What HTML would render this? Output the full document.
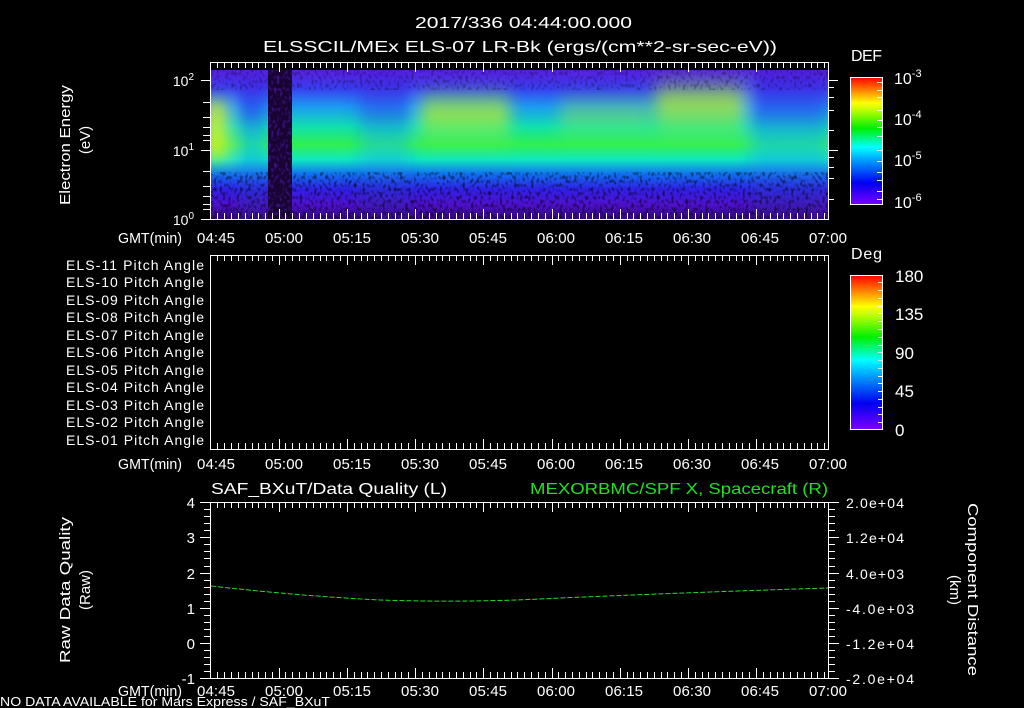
<!DOCTYPE html>
<html><head><meta charset="utf-8"><style>
html,body{margin:0;padding:0;background:#000;width:1024px;height:708px;overflow:hidden}
svg{display:block}
text{font-family:"Liberation Sans",sans-serif;fill:#fff}
</style></head><body>
<svg width="1024" height="708" viewBox="0 0 1024 708" xmlns="http://www.w3.org/2000/svg">
<defs>
<linearGradient id="spec" x1="0" y1="0" x2="0" y2="1">
<stop offset="0" stop-color="#5a1ee0"/>
<stop offset="0.12" stop-color="#3a3cf0"/>
<stop offset="0.25" stop-color="#1c9cf0"/>
<stop offset="0.38" stop-color="#10e0b0"/>
<stop offset="0.5" stop-color="#30f050"/>
<stop offset="0.6" stop-color="#10e8c0"/>
<stop offset="0.7" stop-color="#1070f0"/>
<stop offset="0.8" stop-color="#3020e8"/>
<stop offset="0.9" stop-color="#5010d0"/>
<stop offset="1" stop-color="#30087a"/>
</linearGradient>
<linearGradient id="weak" x1="0" y1="0" x2="0" y2="1">
<stop offset="0" stop-color="#5018d8"/>
<stop offset="0.3" stop-color="#2840f0"/>
<stop offset="0.45" stop-color="#10c0e8"/>
<stop offset="0.6" stop-color="#10c8e0"/>
<stop offset="0.72" stop-color="#2040f0"/>
<stop offset="1" stop-color="#40108a"/>
</linearGradient>
<linearGradient id="hot" x1="0" y1="0" x2="0" y2="1">
<stop offset="0" stop-color="#a0f020" stop-opacity="0"/>
<stop offset="0.4" stop-color="#c8f020" stop-opacity="0.8"/>
<stop offset="0.7" stop-color="#80f040" stop-opacity="0.5"/>
<stop offset="1" stop-color="#40f060" stop-opacity="0"/>
</linearGradient>
<linearGradient id="cb1" x1="0" y1="1" x2="0" y2="0">
<stop offset="0" stop-color="#7a00ff"/>
<stop offset="0.17" stop-color="#0000f0"/>
<stop offset="0.35" stop-color="#00a0ff"/>
<stop offset="0.45" stop-color="#00ffff"/>
<stop offset="0.6" stop-color="#00f000"/>
<stop offset="0.75" stop-color="#c8ff00"/>
<stop offset="0.8" stop-color="#ffff00"/>
<stop offset="0.9" stop-color="#ff8000"/>
<stop offset="1" stop-color="#ff0000"/>
</linearGradient>
<filter id="noise" x="0" y="0" width="100%" height="100%">
<feTurbulence type="fractalNoise" baseFrequency="0.35 0.25" numOctaves="1" seed="3" result="n"/>
<feColorMatrix in="n" type="matrix" values="0 0 0 0 0  0 0 0 0 0  0 0 0 0 0  0 0 0 -2.2 1.15" result="a"/>
<feComposite in="SourceGraphic" in2="a" operator="in"/>
</filter>
<filter id="blur" x="-20%" y="-20%" width="140%" height="140%"><feGaussianBlur stdDeviation="8"/></filter>
<clipPath id="c1"><rect x="211" y="70" width="617" height="149"/></clipPath>
</defs>

<!-- Titles -->
<text x="415" y="28" font-size="16" textLength="217" lengthAdjust="spacingAndGlyphs">2017/336 04:44:00.000</text>
<text x="263" y="52" font-size="16" textLength="514" lengthAdjust="spacingAndGlyphs">ELSSCIL/MEx ELS-07 LR-Bk  (ergs/(cm**2-sr-sec-eV))</text>

<!-- Panel 1 spectrogram -->
<g clip-path="url(#c1)">
<rect x="211" y="70" width="617" height="149" fill="url(#spec)"/>
<g filter="url(#blur)">
<rect x="240" y="70" width="25" height="149" fill="url(#weak)" opacity="0.7"/>
<rect x="360" y="70" width="50" height="149" fill="url(#weak)" opacity="0.5"/>
<rect x="750" y="70" width="78" height="149" fill="url(#weak)" opacity="0.6"/>
<rect x="205" y="100" width="22" height="60" fill="#f0f020" opacity="0.8"/>
<rect x="420" y="85" width="90" height="70" fill="url(#hot)"/>
<rect x="655" y="72" width="90" height="80" fill="url(#hot)"/>
<rect x="560" y="90" width="90" height="60" fill="url(#hot)" opacity="0.5"/>
</g>
<rect x="211" y="172" width="617" height="47" fill="#000" filter="url(#noise)" opacity="0.9"/>
<rect x="211" y="70" width="617" height="20" fill="#000" filter="url(#noise)" opacity="0.5"/>
<rect x="268" y="70" width="24" height="149" fill="#180430"/>
<rect x="268" y="70" width="24" height="149" fill="#6020e0" filter="url(#noise)" opacity="0.8"/>
</g>
<rect x="210.5" y="62.5" width="618" height="157" fill="none" stroke="#fff"/>
<rect x="210.5" y="255.5" width="618" height="194" fill="none" stroke="#fff"/>
<rect x="210.5" y="502.5" width="618" height="176" fill="none" stroke="#fff"/>

<!-- time ticks -->
<g stroke="#fff" stroke-width="1">
<path id="tk1" d="M217.5 62v6M224.5 62v6M231.5 62v6M238.5 62v6M245.5 62v6M252.5 62v6M258.5 62v6M265.5 62v6M272.5 62v6M279.5 62v10M285.5 62v6M292.5 62v6M299.5 62v6M306.5 62v6M313.5 62v6M320.5 62v6M326.5 62v6M333.5 62v6M340.5 62v6M347.5 62v10M354.5 62v6M361.5 62v6M367.5 62v6M374.5 62v6M381.5 62v6M388.5 62v6M395.5 62v6M401.5 62v6M408.5 62v6M415.5 62v10M422.5 62v6M429.5 62v6M436.5 62v6M442.5 62v6M449.5 62v6M456.5 62v6M463.5 62v6M470.5 62v6M476.5 62v6M483.5 62v10M490.5 62v6M497.5 62v6M504.5 62v6M511.5 62v6M517.5 62v6M524.5 62v6M531.5 62v6M538.5 62v6M545.5 62v6M552.5 62v10M558.5 62v6M565.5 62v6M572.5 62v6M579.5 62v6M586.5 62v6M592.5 62v6M599.5 62v6M606.5 62v6M613.5 62v6M620.5 62v10M627.5 62v6M633.5 62v6M640.5 62v6M647.5 62v6M654.5 62v6M661.5 62v6M667.5 62v6M674.5 62v6M681.5 62v6M688.5 62v10M695.5 62v6M702.5 62v6M708.5 62v6M715.5 62v6M722.5 62v6M729.5 62v6M736.5 62v6M742.5 62v6M749.5 62v6M756.5 62v10M763.5 62v6M770.5 62v6M777.5 62v6M783.5 62v6M790.5 62v6M797.5 62v6M804.5 62v6M811.5 62v6M817.5 62v6M824.5 62v6"/>
<use href="#tk1" transform="translate(0,281) scale(1,-1)"/>
<use href="#tk1" transform="translate(0,193)"/>
<use href="#tk1" transform="translate(0,511) scale(1,-1)"/>
<use href="#tk1" transform="translate(0,440)"/>
<use href="#tk1" transform="translate(0,740) scale(1,-1)"/>
</g>
<!-- y ticks -->
<g stroke="#fff">
<path d="M201 80.5h10M203 102.5h8M203 117.5h8M203 127.5h8M203 135.5h8M203 140.5h8M201 150.5h10M203 171.5h8M203 186.5h8M203 196.5h8M203 204.5h8M203 209.5h8M201 219.5h10"/>
<path d="M828 80.5h10M828 87.5h6M828 97.5h6M828 110.5h6M828 130.5h6M828 150.5h10M828 157.5h6M828 167.5h6M828 178.5h6M828 199.5h6"/>
<path d="M200 502.5h11M200 537.5h11M200 573.5h11M200 608.5h11M200 643.5h11M200 678.5h11M204 509.5h7M204 516.5h7M204 523.5h7M204 530.5h7M204 544.5h7M204 551.5h7M204 558.5h7M204 566.5h7M204 580.5h7M204 587.5h7M204 594.5h7M204 601.5h7M204 615.5h7M204 622.5h7M204 629.5h7M204 636.5h7M204 650.5h7M204 657.5h7M204 664.5h7M204 671.5h7"/>
<path d="M828 502.5h11M828 537.5h11M828 573.5h11M828 608.5h11M828 643.5h11M828 678.5h11M828 509.5h7M828 516.5h7M828 523.5h7M828 530.5h7M828 544.5h7M828 551.5h7M828 558.5h7M828 566.5h7M828 580.5h7M828 587.5h7M828 594.5h7M828 601.5h7M828 615.5h7M828 622.5h7M828 629.5h7M828 636.5h7M828 650.5h7M828 657.5h7M828 664.5h7M828 671.5h7"/>
</g>

<text x="194" y="86" font-size="14" text-anchor="end">10<tspan font-size="10" dy="-6">2</tspan></text>
<text x="194" y="156" font-size="14" text-anchor="end">10<tspan font-size="10" dy="-6">1</tspan></text>
<text x="194" y="225" font-size="14" text-anchor="end">10<tspan font-size="10" dy="-6">0</tspan></text>
<text transform="translate(70,205) rotate(-90)" font-size="15" textLength="120" lengthAdjust="spacingAndGlyphs">Electron Energy</text>
<text transform="translate(90,140) rotate(-90)" font-size="15" text-anchor="middle">(eV)</text>

<!-- time labels -->
<g font-size="15" id="tl">
<text x="118" y="243" textLength="64" lengthAdjust="spacingAndGlyphs">GMT(min)</text>
<text x="197" y="243" textLength="38">04:45</text><text x="265" y="243" textLength="38">05:00</text><text x="333" y="243" textLength="38">05:15</text><text x="401" y="243" textLength="38">05:30</text><text x="469" y="243" textLength="38">05:45</text><text x="537" y="243" textLength="38">06:00</text><text x="605" y="243" textLength="38">06:15</text><text x="673" y="243" textLength="38">06:30</text><text x="741" y="243" textLength="38">06:45</text><text x="809" y="243" textLength="38">07:00</text>
</g>
<use href="#tl" transform="translate(0,226)"/>
<use href="#tl" transform="translate(0,453)"/>

<!-- colorbar 1 -->
<text x="851" y="61" font-size="16" textLength="31">DEF</text>
<rect x="850.5" y="77.5" width="32" height="127" fill="url(#cb1)" stroke="#fff"/>
<g stroke="#fff"><path d="M877 82.5h5M877 90.5h5M877 97.5h5M877 110.5h5M877 120.5h5M877 127.5h5M877 136.5h5M877 150.5h5M877 161.5h5M877 172.5h5M877 180.5h5M877 191.5h5M877 199.5h5"/></g>
<g font-size="16"><text x="894" y="84">10<tspan font-size="11" dy="-7">-3</tspan></text>
<text x="894" y="125">10<tspan font-size="11" dy="-7">-4</tspan></text>
<text x="894" y="166">10<tspan font-size="11" dy="-7">-5</tspan></text>
<text x="894" y="208">10<tspan font-size="11" dy="-7">-6</tspan></text></g>

<!-- panel 2 labels -->
<g font-size="14">
<text x="66" y="270" textLength="138">ELS-11 Pitch Angle</text><text x="66" y="287" textLength="138">ELS-10 Pitch Angle</text><text x="66" y="305" textLength="138">ELS-09 Pitch Angle</text><text x="66" y="322" textLength="138">ELS-08 Pitch Angle</text><text x="66" y="340" textLength="138">ELS-07 Pitch Angle</text><text x="66" y="357" textLength="138">ELS-06 Pitch Angle</text><text x="66" y="375" textLength="138">ELS-05 Pitch Angle</text><text x="66" y="392" textLength="138">ELS-04 Pitch Angle</text><text x="66" y="410" textLength="138">ELS-03 Pitch Angle</text><text x="66" y="427" textLength="138">ELS-02 Pitch Angle</text><text x="66" y="445" textLength="138">ELS-01 Pitch Angle</text>
</g>
<text x="851" y="259" font-size="16" textLength="31">Deg</text>
<rect x="850.5" y="275.5" width="32" height="154" fill="url(#cb1)" stroke="#fff"/>
<g stroke="#fff"><path d="M878 282.5h4M878 290.5h4M878 298.5h4M878 306.5h4M878 313.5h4M878 321.5h4M878 329.5h4M878 337.5h4M878 345.5h4M878 352.5h4M878 360.5h4M878 368.5h4M878 376.5h4M878 383.5h4M878 391.5h4M878 399.5h4M878 407.5h4M878 414.5h4M878 422.5h4"/></g>
<g font-size="17"><text x="895" y="282">180</text><text x="895" y="320">135</text><text x="895" y="359">90</text><text x="895" y="397">45</text><text x="895" y="436">0</text></g>

<!-- panel 3 -->
<text x="211" y="494" font-size="16" textLength="236" lengthAdjust="spacingAndGlyphs">SAF_BXuT/Data Quality (L)</text>
<text x="530" y="494" font-size="16" textLength="298" lengthAdjust="spacingAndGlyphs" style="fill:#20e020">MEXORBMC/SPF X, Spacecraft (R)</text>
<g font-size="15" text-anchor="end">
<text x="195" y="508">4</text><text x="195" y="543">3</text><text x="195" y="579">2</text><text x="195" y="614">1</text><text x="195" y="649">0</text><text x="195" y="684">-1</text>
</g>
<g font-size="14">
<text x="846" y="508" textLength="58">2.0e+04</text><text x="846" y="543" textLength="58">1.2e+04</text><text x="846" y="579" textLength="58">4.0e+03</text><text x="846" y="614" textLength="68">-4.0e+03</text><text x="846" y="649" textLength="68">-1.2e+04</text><text x="846" y="684" textLength="68">-2.0e+04</text>
</g>
<text transform="translate(70,663) rotate(-90)" font-size="15" textLength="146" lengthAdjust="spacingAndGlyphs">Raw Data Quality</text>
<text transform="translate(90,590) rotate(-90)" font-size="15" text-anchor="middle">(Raw)</text>
<text transform="translate(968,503) rotate(90)" font-size="15" textLength="173" lengthAdjust="spacingAndGlyphs">Component Distance</text>
<text transform="translate(950,590) rotate(90)" font-size="15" text-anchor="middle">(km)</text>
<path d="M211 586 Q 300 596 380 600 Q 470 603 560 598 Q 700 592 828 588" fill="none" stroke="#20e020" stroke-width="1" stroke-dasharray="5 2"/>

<text x="0" y="706" font-size="13" textLength="330" lengthAdjust="spacingAndGlyphs">NO DATA AVAILABLE for Mars  Express / SAF_BXuT</text>
</svg>
</body></html>
